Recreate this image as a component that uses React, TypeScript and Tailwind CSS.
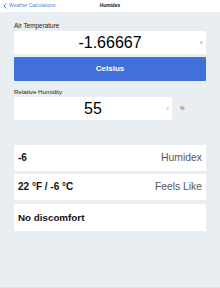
export default function App() {
  const font = { fontFamily: '"Liberation Sans", Arial, sans-serif' };
  return (
    <div className="w-[220px] h-[288px] bg-[#e9eef3] flex flex-col border-b border-[#dfe3e8]" style={font}>
      <div className="h-[12px] bg-white flex items-center relative shrink-0">
        <div className="flex items-center pl-[3px] text-[#4a7fd6]">
          <svg width="4" height="6" viewBox="0 0 4 6" className="mr-[2px]">
            <path d="M3.3 0.5 L1 3 L3.3 5.5" fill="none" stroke="#4a7fd6" strokeWidth="1" />
          </svg>
          <span className="text-[4.9px] leading-none">Weather Calculations</span>
        </div>
        <span className="absolute left-0 right-0 text-center text-[4.8px] font-bold leading-none text-[#111]">Humidex</span>
      </div>
      <div className="px-[14px] flex flex-col">
        <div className="text-[6.4px] leading-none text-[#222] mt-[11px] h-[8px]">Air Temperature</div>
        <div className="h-[23px] bg-white flex items-center relative">
          <span className="flex-1 text-center text-[16px] leading-none text-black">-1.66667</span>
          <span className="absolute right-[3px] w-[3px] h-[3px] rounded-full bg-[#cfcfcf]"></span>
        </div>
        <div className="h-[24px] mt-[3px] bg-[#4170da] rounded-[1px] flex items-center justify-center">
          <span className="text-white text-[8px] font-bold leading-none">Celsius</span>
        </div>
        <div className="text-[6.2px] leading-none text-[#222] mt-[8px] h-[8px]">Relative Humidity</div>
        <div className="flex items-center">
          <div className="w-[158px] h-[23px] bg-white flex items-center relative">
            <span className="flex-1 text-center text-[16px] leading-none text-black">55</span>
            <span className="absolute right-[3px] w-[3px] h-[3px] rounded-full bg-[#dcdcdc]"></span>
          </div>
          <span className="ml-[8px] text-[5px] leading-none text-[#555]">%</span>
        </div>
        <div className="mt-[25px] flex flex-col gap-[3px]">
          <div className="h-[26px] bg-white flex items-center justify-between px-[4px]">
            <span className="text-[10px] font-bold text-[#111] leading-none">-6</span>
            <span className="text-[10.4px] text-[#585858] leading-none">Humidex</span>
          </div>
          <div className="h-[26px] bg-white flex items-center justify-between px-[4px]">
            <span className="text-[10px] font-bold text-[#111] leading-none">22 °F / -6 °C</span>
            <span className="text-[10.3px] text-[#585858] leading-none">Feels Like</span>
          </div>
          <div className="h-[27px] mt-[1px] bg-white flex items-center px-[4px]">
            <span className="text-[9.8px] font-bold text-[#111] leading-none">No discomfort</span>
          </div>
        </div>
      </div>
    </div>
  );
}
